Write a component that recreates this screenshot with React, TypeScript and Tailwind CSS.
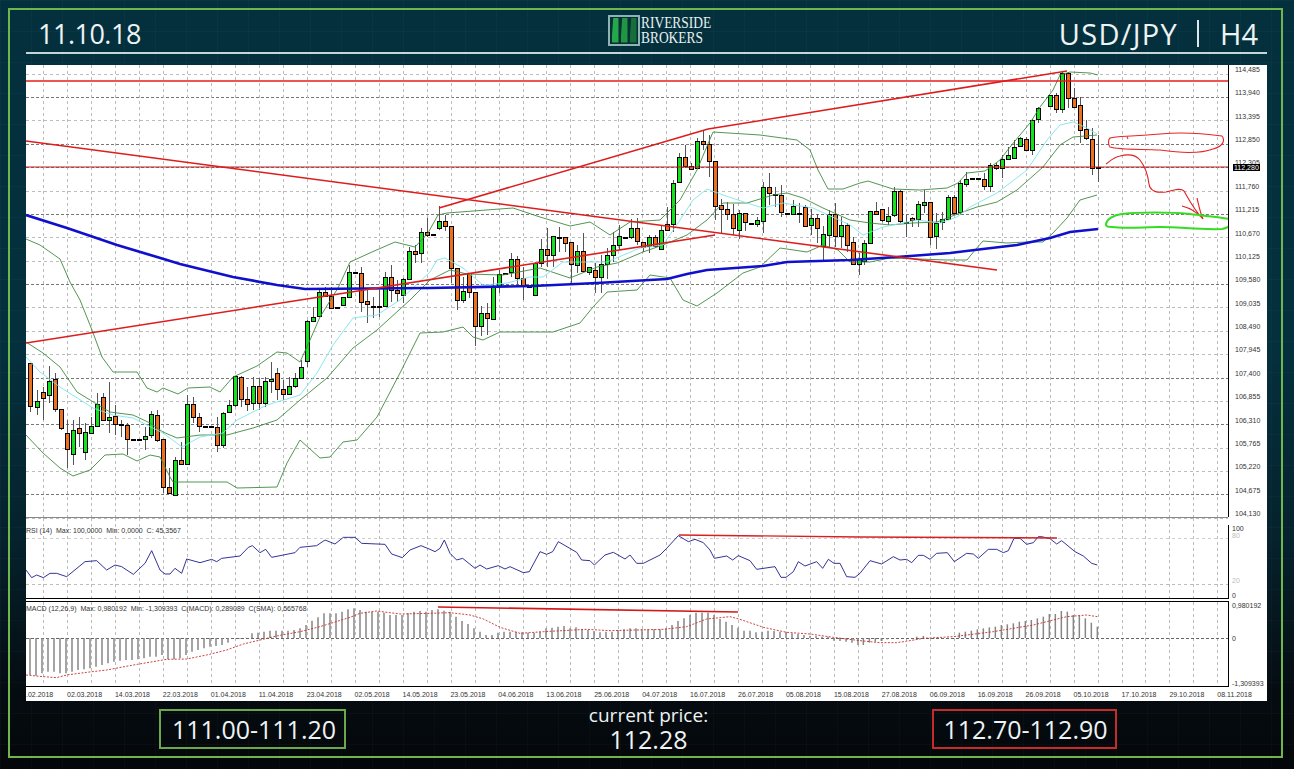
type Candle = [number, number, number, number, number, number]
type Pt = [number, number]

// readings are per crop, at() moves them back to page coordinates
const at = (ox: number, oy: number, rows: number[][]) =>
  rows.map((r) => [ox + r[0] / 3, oy + r[1] / 3, oy + r[2] / 3, oy + r[3] / 3, oy + r[4] / 3, r[5]] as Candle)
const line = (ox: number, oy: number, rows: number[][]) => rows.map((r) => [ox + r[0] / 3, oy + r[1] / 3] as Pt)
const pts = (p: Pt[]) => p.map((q) => q.join(',')).join(' ')

const candles: Candle[] = [
  ...at(0, 260, [
    [90, 308, 436, 308, 455, 0], [110, 422, 440, 390, 465, 1], [128, 396, 415, 380, 480, 0], [147, 362, 403, 318, 430, 1],
    [165, 358, 448, 338, 455, 0], [183, 448, 506, 448, 510, 0], [201, 520, 568, 480, 625, 0], [219, 511, 583, 480, 615, 1],
    [237, 505, 519, 472, 560, 0], [255, 517, 577, 490, 600, 1], [273, 497, 517, 470, 520, 1], [291, 431, 496, 400, 500, 1],
    [309, 412, 480, 400, 482, 0], [327, 470, 479, 365, 520, 1], [345, 468, 493, 435, 525, 0], [363, 493, 495, 480, 530, 0],
    [381, 495, 538, 490, 585, 0], [399, 537, 539, 537, 539, 0], [417, 537, 539, 537, 539, 0], [435, 527, 536, 500, 570, 1],
    [453, 463, 527, 452, 535, 1], [471, 464, 538, 450, 545, 0], [489, 538, 682, 538, 700, 0], [507, 682, 700, 625, 703, 0],
    [525, 601, 705, 590, 708, 1], [543, 601, 612, 545, 612, 0], [561, 431, 612, 405, 615, 1], [579, 431, 470, 410, 490, 0],
    [597, 470, 498, 460, 515, 0], [615, 497, 499, 497, 499, 0], [633, 497, 499, 497, 499, 0], [651, 500, 553, 470, 575, 0],
    [669, 458, 553, 455, 565, 1], [687, 436, 458, 420, 460, 1], [705, 349, 436, 349, 440, 1], [723, 350, 416, 348, 440, 0],
    [741, 416, 430, 380, 452, 0], [759, 379, 431, 350, 450, 1], [777, 379, 431, 355, 450, 0], [795, 364, 431, 350, 440, 1],
    [813, 358, 363, 305, 400, 1], [831, 340, 388, 325, 420, 0], [849, 388, 403, 360, 420, 0], [867, 379, 403, 350, 405, 1],
    [885, 355, 379, 340, 385, 1], [903, 322, 355, 300, 355, 1], [921, 183, 304, 180, 320, 1], [939, 170, 183, 140, 185, 1],
    [957, 97, 169, 90, 170, 1], [975, 95, 107, 80, 110, 0], [993, 107, 142, 80, 147, 0], [1011, 142, 143, 142, 143, 0],
    [1029, 112, 136, 112, 136, 1], [1047, 37, 111, 15, 112, 1], [1065, 37, 38, 37, 38, 0], [1083, 38, 124, 20, 155, 0],
    [1101, 124, 133, 90, 190, 0], [1119, 137, 139, 110, 175, 0], [1137, 137, 139, 90, 170, 0], [1155, 52, 138, 35, 140, 1],
    [1173, 52, 90, 15, 125, 0], [1191, 90, 100, 60, 125, 0], [1209, 58, 106, 55, 130, 1],
  ]),
  ...at(395, 195, [
    [42, 168, 253, 155, 255, 1], [60, 168, 176, 150, 205, 0], [78, 112, 176, 98, 205, 1], [96, 112, 122, 70, 125, 0], [114, 118, 120, 118, 120, 0],
  ]),
  ...at(430, 120, [
    [26, 304, 325, 258, 330, 1], [44, 304, 319, 285, 333, 0], [62, 319, 445, 319, 490, 0], [80, 445, 541, 445, 570, 0],
    [98, 514, 541, 470, 550, 1], [116, 460, 517, 460, 535, 0], [134, 517, 620, 517, 678, 0], [152, 580, 620, 558, 648, 1],
    [170, 580, 596, 550, 645, 0], [188, 500, 596, 470, 596, 1], [206, 461, 498, 450, 518, 1], [224, 459, 461, 459, 461, 0],
    [242, 418, 458, 400, 470, 1], [260, 418, 475, 408, 500, 0], [278, 475, 497, 440, 540, 0], [296, 497, 499, 497, 499, 0],
    [314, 430, 525, 425, 525, 1], [332, 388, 430, 358, 440, 1], [350, 388, 405, 325, 440, 0], [368, 349, 405, 349, 440, 1],
    [386, 350, 352, 320, 395, 0], [404, 350, 367, 350, 395, 0], [422, 367, 433, 367, 490, 0], [440, 392, 433, 375, 460, 1],
    [458, 392, 451, 340, 455, 0], [476, 442, 456, 440, 465, 1], [494, 451, 471, 430, 518, 0], [512, 433, 471, 405, 518, 1],
    [530, 406, 433, 385, 478, 1], [548, 376, 406, 335, 425, 1], [566, 349, 376, 315, 390, 1], [584, 350, 352, 350, 352, 0],
    [602, 325, 353, 298, 356, 1], [620, 325, 365, 295, 375, 0], [638, 365, 380, 365, 395, 0], [656, 352, 378, 345, 400, 1],
    [674, 352, 380, 345, 385, 0], [692, 329, 385, 315, 390, 1], [710, 311, 328, 262, 330, 0], [728, 188, 311, 180, 335, 1],
    [746, 112, 188, 100, 188, 1], [764, 112, 138, 75, 145, 0], [782, 138, 146, 130, 148, 0], [800, 64, 146, 55, 148, 1],
    [818, 64, 73, 32, 90, 0], [836, 73, 124, 45, 170, 0], [854, 124, 258, 124, 300, 0], [872, 256, 268, 238, 338, 0],
    [890, 268, 283, 245, 300, 0], [908, 283, 326, 253, 345, 0], [926, 278, 328, 270, 358, 1], [944, 278, 304, 278, 333, 0],
    [962, 310, 312, 310, 312, 0], [980, 301, 313, 290, 320, 1], [998, 202, 303, 185, 340, 1], [1016, 202, 221, 160, 255, 0],
    [1034, 222, 226, 200, 260, 0], [1052, 226, 277, 195, 292, 0], [1070, 280, 282, 280, 282, 0], [1088, 258, 281, 240, 285, 1],
    [1106, 280, 282, 248, 310, 0], [1124, 260, 316, 255, 318, 0], [1142, 295, 316, 268, 345, 1], [1160, 295, 325, 283, 370, 0],
    [1178, 343, 378, 318, 420, 1], [1196, 281, 343, 270, 380, 1], [1214, 282, 349, 250, 382, 0], [1232, 316, 349, 290, 385, 1],
    [1250, 316, 376, 310, 395, 0], [1268, 367, 434, 350, 435, 0],
  ]),
  ...at(850, 170, [
    [26, 268, 283, 250, 315, 1], [42, 218, 272, 210, 285, 1], [60, 122, 218, 122, 218, 1], [78, 122, 132, 95, 135, 0],
    [96, 118, 150, 118, 155, 0], [114, 137, 152, 110, 165, 1], [132, 64, 137, 52, 140, 1], [150, 64, 155, 60, 160, 0],
    [168, 155, 157, 135, 200, 0], [186, 145, 150, 140, 170, 0], [204, 103, 148, 92, 170, 1], [222, 95, 103, 60, 130, 1],
    [240, 95, 200, 95, 225, 0], [258, 160, 200, 130, 237, 1], [276, 146, 155, 125, 180, 1], [294, 80, 145, 75, 150, 1],
    [312, 80, 128, 75, 135, 0], [330, 40, 128, 30, 135, 1], [348, 26, 40, 5, 50, 1], [366, 24, 26, 24, 26, 0], [384, 24, 26, 24, 26, 0],
    [402, 28, 50, 10, 60, 0],
  ]),
  ...at(860, 0, [
    [390, 494, 558, 490, 575, 1], [408, 494, 504, 490, 510, 0], [426, 478, 504, 465, 535, 1], [444, 466, 478, 440, 480, 1],
    [462, 440, 472, 420, 475, 1], [480, 415, 440, 410, 440, 1], [498, 416, 450, 410, 452, 0], [516, 360, 450, 358, 465, 1],
    [534, 325, 359, 320, 368, 1], [570, 284, 316, 284, 320, 1], [588, 284, 327, 280, 340, 0], [606, 220, 327, 215, 340, 1],
    [624, 220, 294, 215, 325, 0], [642, 295, 322, 265, 325, 0], [660, 314, 388, 290, 430, 0], [678, 388, 415, 360, 420, 0],
    [696, 416, 503, 385, 525, 0], [714, 500, 502, 405, 545, 0],
  ]),
]

const upperBand: Pt[] = [[26,239],[40,245],[60,259],[70,282],[80,300],[92,330],[102,357],[113,372],[137,372],[147,388],[157,392],[163,388],[178,394],[188,388],[210,387],[220,392],[233,377],[257,366],[277,352],[287,353],[300,362],[310,340],[320,317],[338,288],[350,262],[372,252],[395,242],[415,247],[428,233],[438,215],[447,213],[513,208],[540,217],[570,226],[590,222],[610,235],[630,222],[660,220],[680,200],[697,170],[713,132],[760,135],[797,140],[810,150],[818,170],[828,189],[843,189],[860,183],[868,181],[893,189],[920,190],[947,188],[958,183],[967,173],[985,171],[1000,160],[1010,147],[1030,123],[1040,107],[1053,90],[1060,75],[1070,72],[1090,73],[1098,75]]
const midBand: Pt[] = [[26,342],[43,353],[60,367],[77,392],[95,403],[110,412],[133,415],[150,423],[163,432],[177,438],[200,435],[227,435],[253,428],[277,420],[300,400],[327,378],[353,348],[377,330],[410,300],[430,280],[450,270],[467,274],[503,275],[540,268],[570,278],[597,267],[617,263],[643,252],[663,245],[687,235],[707,220],[723,203],[747,203],[773,195],[787,193],[803,198],[823,208],[850,220],[870,223],[890,225],[913,223],[937,222],[960,213],[977,207],[997,202],[1017,190],[1043,167],[1060,145],[1073,137],[1097,135]]
const cyanLine: Pt[] = [[26,357],[40,372],[60,387],[93,408],[113,415],[133,418],[147,425],[163,433],[182,447],[200,437],[223,433],[237,420],[267,405],[300,395],[317,373],[333,345],[353,318],[377,315],[400,300],[430,272],[437,260],[445,258],[463,268],[483,285],[507,283],[530,277],[543,277],[563,262],[607,262],[640,248],[663,245],[680,220],[693,200],[707,189],[723,195],[747,203],[763,208],[783,203],[813,208],[850,225],[863,235],[883,227],[917,220],[940,223],[957,217],[970,207],[997,193],[1027,170],[1047,140],[1060,125],[1073,122],[1087,128],[1097,134]]
const lowerBand: Pt[] = [[26,435],[43,453],[60,468],[73,476],[90,470],[105,455],[123,454],[137,461],[150,455],[160,457],[170,477],[173,482],[227,482],[237,488],[277,487],[287,463],[300,440],[320,458],[330,457],[343,442],[357,440],[377,417],[400,373],[420,333],[443,332],[463,327],[473,337],[483,340],[500,332],[553,332],[580,323],[593,307],[607,292],[637,290],[650,275],[670,278],[683,300],[697,306],[717,293],[743,273],[760,267],[780,248],[807,252],[823,245],[838,250],[850,262],[870,262],[890,258],[947,260],[967,260],[975,250],[983,241],[1007,243],[1027,242],[1043,242],[1053,233],[1067,218],[1080,200],[1097,195]]
const slowMa: Pt[] = [[26,215],[67,228],[117,245],[167,260],[180,264],[233,277],[277,285],[305,289],[430,288],[533,286],[597,283],[667,279],[687,274],[707,270],[763,266],[787,262],[850,260],[897,257],[950,253],[983,249],[1017,245],[1050,238],[1070,232],[1098,229]]

const rsi: Pt[] = [
  ...line(0, 510, [[78,180],[95,203],[110,195],[130,203],[150,190],[170,190],[200,200],[255,155],[290,152],[320,180],[345,165],[365,170],[400,193],[435,160],[455,122],[480,180],[495,192],[510,192],[525,175],[545,190],[560,147],[600,158],[635,148],[650,155],[665,145],[720,138],[745,112],[757,107],[780,128],[797,118],[815,142],[885,128],[900,112],[950,107],[975,90],[1005,102],[1030,82],[1065,82],[1085,100],[1155,103],[1175,132],[1207,143],[1230,120],[1263,107],[1290,118]]),
  ...line(430, 520, [[15,95],[30,85],[43,60],[60,100],[80,120],[98,115],[135,145],[150,135],[170,147],[205,137],[225,147],[240,140],[280,158],[298,155],[330,95],[350,103],[368,95],[385,65],[440,97],[455,120],[480,122],[493,135],[525,105],[550,97],[585,117],[600,105],[620,130],[640,130],[690,105],[710,85],[745,47],[775,65],[795,58],[820,68],[840,90],[853,115],[890,108],[908,120],[925,107],[960,122],[980,148],[1035,140],[1053,172],[1068,172],[1090,155],[1105,125],[1125,138],[1160,125],[1178,145],[1195,118],[1212,130],[1230,130],[1250,170],[1275,172],[1290,160]]),
  ...line(860, 510, [[30,152],[65,162],[100,140],[120,150],[140,148],[155,158],[175,136],[190,136],[210,148],[230,130],[262,128],[283,155],[320,130],[340,132],[355,145],[385,118],[410,118],[430,128],[445,122],[462,85],[480,85],[500,103],[520,98],[535,80],[545,80],[570,86],[590,102],[605,92],[645,125],[670,138],[695,160],[712,165]]),
]

const macdBars: Pt[] = [
  ...line(0, 510, [[90,495],[108,497],[126,490],[144,485],[162,485],[180,490],[198,490],[216,485],[234,480],[252,478],[270,475],[288,470],[306,465],[324,460],[342,455],[360,452],[378,450],[396,450],[414,448],[432,445],[450,440],[468,440],[486,435],[504,448],[522,448],[540,445],[558,435],[576,425],[594,420],[612,415],[630,410],[648,408],[666,405],[684,398],[720,386],[738,383],[756,370],[774,368],[792,365],[810,362],[828,362],[846,362],[864,362],[882,360],[900,355],[918,345],[936,332],[954,322],[972,310],[990,310],[1008,310],[1026,305],[1044,298],[1062,295],[1080,300],[1098,305],[1116,305],[1134,305],[1152,308],[1170,315],[1188,315],[1206,315],[1224,310],[1242,305],[1260,303],[1278,305]]),
  ...line(430, 520, [[6,270],[24,268],[42,272],[60,275],[78,290],[96,303],[114,312],[132,325],[150,335],[168,345],[186,345],[204,338],[222,335],[240,335],[258,335],[276,337],[294,338],[312,338],[330,335],[348,325],[366,323],[384,320],[402,318],[420,325],[438,322],[456,327],[474,330],[492,333],[510,337],[528,335],[546,335],[564,330],[582,328],[600,325],[618,325],[636,328],[654,328],[672,328],[690,328],[708,325],[726,315],[744,303],[762,295],[780,285],[798,278],[816,278],[834,278],[852,285],[870,297],[888,305],[906,315],[924,323],[942,332],[960,332],[978,337],[996,335],[1014,332],[1032,333],[1050,335],[1068,335],[1086,340],[1104,342],[1122,345],[1140,347],[1158,348],[1176,350],[1194,350],[1212,362],[1230,363],[1248,365],[1266,368],[1284,375]]),
  ...line(860, 510, [[10,405],[28,398],[46,395],[64,393],[82,388],[170,380],[190,378],[298,368],[316,365],[334,362],[352,358],[370,355],[388,352],[406,350],[424,345],[442,343],[460,340],[478,335],[496,333],[514,330],[532,325],[550,320],[568,312],[586,312],[604,303],[622,305],[640,315],[658,317],[676,325],[694,338],[712,350]]),
]

const macdSignal: Pt[] = [
  ...line(0, 510, [[78,495],[130,500],[170,503],[200,495],[260,487],[320,480],[400,465],[500,448],[560,447],[620,435],[680,420],[730,402],[780,390],[830,378],[900,365],[960,350],[1050,322],[1080,310],[1130,303],[1200,312],[1290,310]]),
  ...line(430, 520, [[60,278],[120,285],[160,297],[210,322],[270,340],[340,335],[470,328],[540,332],[700,328],[770,320],[830,297],[900,290],[930,298],[1000,322],[1070,337],[1140,342],[1210,352],[1290,362]]),
  ...line(860, 510, [[60,398],[110,398],[150,392],[190,385],[280,380],[400,365],[520,345],[620,320],[680,315],[712,320]]),
]

const priceLabels = ['114,485','113,940','113,395','112,850','112,305','111,760','111,215','110,670','110,125','109,580','109,035','108,490','107,945','107,400','106,855','106,310','105,765','105,220','104,675','104,130']
const dateLabels = ['02.03.2018','14.03.2018','22.03.2018','01.04.2018','11.04.2018','23.04.2018','02.05.2018','14.05.2018','23.05.2018','04.06.2018','13.06.2018','25.06.2018','04.07.2018','16.07.2018','26.07.2018','05.08.2018','15.08.2018','27.08.2018','06.09.2018','16.09.2018','26.09.2018','05.10.2018','17.10.2018','29.10.2018','08.11.2018']
const darkRows = [1, 3, 4, 6, 9, 13, 15, 18]

function Chart() {
  return (
    <svg viewBox="26 65 1241 636" className="block h-[636px] w-[1241px] font-['Liberation_Sans',sans-serif] text-[7px]">
      <defs>
        <clipPath id="plot"><rect x="26" y="65" width="1202" height="452" /></clipPath>
      </defs>

      {/* grid */}
      {Array.from({ length: 20 }, (_, i) => {
        const y = Math.round(73.7 + 23.37 * i) + 0.5
        const dark = darkRows.includes(i)
        return <line key={i} x1="26" x2="1228" y1={y} y2={y} stroke={dark ? '#777' : '#bcbcbc'} strokeDasharray={dark ? '3 2' : '3 3'} />
      })}
      {Array.from({ length: 50 }, (_, i) => {
        const x = Math.round(43.3 + 23.96 * i) + 0.5
        return (
          <g key={i} stroke="#bcbcbc" strokeDasharray="3 3">
            <line x1={x} x2={x} y1="65" y2="517" />
            <line x1={x} x2={x} y1="518" y2="598" />
            <line x1={x} x2={x} y1="602" y2="686" />
          </g>
        )
      })}
      <line x1="26" x2="1228" y1="538.5" y2="538.5" stroke="#cfcfcf" strokeDasharray="3 3" />
      <line x1="26" x2="1228" y1="584.5" y2="584.5" stroke="#bcbcbc" strokeDasharray="3 3" />
      <line x1="26" x2="1228" y1="638.5" y2="638.5" stroke="#666" strokeDasharray="3 2" />

      <g clipPath="url(#plot)">
        {/* candles */}
        {candles.map(([cx, top, bottom, hi, lo, up], i) => {
          const x = Math.round(cx)
          const t = Math.round(Math.min(top, bottom))
          const h = Math.max(Math.round(Math.abs(bottom - top)), 1)
          return (
            <g key={i} shapeRendering="crispEdges">
              <line x1={x + 0.5} x2={x + 0.5} y1={hi} y2={lo} stroke="#555" />
              <rect x={x - 1.5} y={t + 0.5} width="4" height={h} fill={up ? '#14e21c' : '#ec701e'} stroke="#000" />
            </g>
          )
        })}

        {/* indicators */}
        <polyline points={pts(upperBand)} fill="none" stroke="#3f8a3f" strokeWidth="0.9" />
        <polyline points={pts(midBand)} fill="none" stroke="#3f8a3f" strokeWidth="0.9" />
        <polyline points={pts(lowerBand)} fill="none" stroke="#3f8a3f" strokeWidth="0.9" />
        <polyline points={pts(cyanLine)} fill="none" stroke="#7ee4ea" strokeWidth="0.9" />
        <polyline points={pts(slowMa)} fill="none" stroke="#1010cc" strokeWidth="2.7" />

        {/* trend lines */}
        <line x1="26" y1="81" x2="1228" y2="81" stroke="#e41c1c" strokeWidth="1.5" />
        <line x1="26" y1="167" x2="1228" y2="167" stroke="#c02020" strokeWidth="1" />
        <line x1="26" y1="141" x2="997" y2="270" stroke="#dd1c1c" strokeWidth="1.6" />
        <line x1="26" y1="343" x2="715" y2="235" stroke="#dd1c1c" strokeWidth="1.6" />
        <line x1="439" y1="208" x2="708" y2="129" stroke="#dd1c1c" strokeWidth="1.6" />
        <line x1="708" y1="129" x2="1067" y2="71" stroke="#dd1c1c" strokeWidth="1.6" />

        {/* hand marks */}
        <path d="M1110 138 C1118 136 1127 137 1160 134 C1180 132 1200 133 1222 136 C1225 140 1224 146 1213 149 C1200 154 1180 153 1160 150 C1140 149 1120 150 1110 147 C1108 144 1108 140 1110 138 M1127 137 L1128 139" fill="none" stroke="#e82424" strokeWidth="1.1" />
        <path d="M1106 164 C1110 161 1114 157 1120 156 C1128 154 1135 154 1140 160 C1146 168 1148 175 1149 184 C1150 192 1158 193 1166 192 C1172 191 1180 187 1184 191 C1188 198 1194 210 1203 219 M1182 206 C1190 208 1197 212 1203 219 M1197 198 C1199 206 1200 212 1203 219" fill="none" stroke="#e02020" strokeWidth="1.1" />
        <path d="M1106 225 C1106 219 1114 215 1122 214 C1140 212 1170 212 1190 214 C1205 216 1220 217 1229 219 C1232 224 1230 228 1222 229 C1200 230 1180 227 1160 227 C1145 227 1125 229 1112 227 C1108 227 1106 226 1106 225" fill="none" stroke="#35dc22" strokeWidth="2" />
      </g>

      {/* rsi window */}
      <polyline points={pts(rsi)} fill="none" stroke="#1c1c8c" strokeWidth="0.9" />
      <polyline points="679,535 860,537 1057,538" fill="none" stroke="#d82020" strokeWidth="1.4" />
      <text x="26" y="533" fill="#333" className="whitespace-pre">RSI (14)  Max: 100,0000  Min: 0,0000  C: 45,3567</text>

      {/* macd window */}
      {macdBars.map(([x, y], i) => (
        <line key={i} x1={x} x2={x} y1={y} y2="638" stroke="#868686" strokeWidth="1.5" />
      ))}
      <polyline points={pts(macdSignal)} fill="none" stroke="#c2302a" strokeWidth="0.9" strokeDasharray="2 1.5" />
      <line x1="438" y1="607" x2="738" y2="612" stroke="#d41818" strokeWidth="1.6" />
      <text x="26" y="611" fill="#333" className="whitespace-pre">MACD (12,26,9)  Max: 0,980192  Min: -1,309393  C(MACD): 0,289089  C(SMA): 0,565768</text>

      {/* frames */}
      <rect x="26" y="517" width="1202" height="1" fill="#888" />
      <rect x="26" y="598" width="1202" height="1" fill="#000" />
      <rect x="26" y="601" width="1202" height="1" fill="#000" />
      <rect x="26" y="686" width="1202" height="1" fill="#000" />
      <rect x="1228" y="65" width="1" height="452" fill="#000" />
      <rect x="1228" y="525" width="1" height="74" fill="#000" />
      <rect x="1228" y="601" width="1" height="86" fill="#000" />

      {/* axis labels */}
      {priceLabels.map((p, i) => (
        <text key={p} x="1235" y={72 + 23.37 * i} fill="#333">{p}</text>
      ))}
      <rect x="1233" y="164" width="27" height="7" fill="#000" />
      <text x="1234" y="170" fill="#fff">112,280</text>
      <text x="1232" y="531" fill="#333">100</text>
      <text x="1232" y="538" fill="#bbb">80</text>
      <text x="1232" y="583" fill="#bbb">20</text>
      <text x="1232" y="598" fill="#333">0</text>
      <text x="1232" y="608" fill="#333">0,980192</text>
      <text x="1232" y="641" fill="#333">0</text>
      <text x="1232" y="686" fill="#333">-1,309393</text>
      <text x="26" y="697" fill="#333">.02.2018</text>
      {dateLabels.map((d, i) => (
        <text key={d} x={67 + 47.93 * i} y="697" fill="#333">{d}</text>
      ))}
    </svg>
  )
}

function Logo() {
  return (
    <div className="flex items-center gap-[1px]">
      <div className="flex h-[31px] w-[32px] items-center justify-center gap-[2px] border-2 border-[#8fb3b3] bg-[#062f36]">
        <div className="h-[25px] w-[7px] bg-[#25a84a] [clip-path:polygon(25%_0,100%_0,100%_100%,0_100%)]" />
        <div className="h-[25px] w-[7px] bg-[#1f9642] [clip-path:polygon(25%_0,100%_0,100%_100%,0_100%)]" />
        <div className="h-[25px] w-[7px] bg-[#146f38] [clip-path:polygon(25%_0,100%_0,100%_100%,0_100%)]" />
      </div>
      <div className="w-[71px] font-['Liberation_Serif',serif] text-[17px] leading-[15.5px] text-[#e6f0ee]">
        <div className="origin-left scale-x-[0.79] whitespace-nowrap">RIVERSIDE</div>
        <div className="origin-left scale-x-[0.79] whitespace-nowrap">BROKERS</div>
      </div>
    </div>
  )
}

export default function App() {
  return (
    <div className="h-[769px] w-[1294px] overflow-hidden bg-[linear-gradient(rgba(255,255,255,.018)_1px,transparent_1px),linear-gradient(90deg,rgba(255,255,255,.018)_1px,transparent_1px),linear-gradient(180deg,#04303e_0%,#04303d_45%,#05222d_70%,#050c11_90%,#04070a_100%)] bg-[size:31px_31px,31px_31px,100%_100%] pb-[11px] pl-[8px] pr-[11px] pt-[8px] font-['Open_Sans',sans-serif] text-[#eef3f4]">
      <div className="flex h-[750px] flex-col border-2 border-[#6fb64c] pl-[16px] pr-[14px]">
        <header className="flex h-[44px] items-center border-b-2 border-[#c6d5d6] pt-[5px]">
          <div className="w-[582px] shrink-0 pl-[12px] text-[27px] font-normal leading-none tracking-[-0.5px]">11.10.18</div>
          <div className="-mt-[7px]"><Logo /></div>
          <div className="ml-auto flex items-center pr-[9px] text-[29px] font-normal leading-none">
            <span className="tracking-[1.3px]">USD/JPY</span>
            <span className="ml-[19px] mr-[21px] h-[27px] w-[2px] bg-[#dfe8e9]" />
            <span>H4</span>
          </div>
        </header>

        <div className="mt-[11px] h-[636px] w-[1241px] bg-white">
          <Chart />
        </div>

        <footer className="mt-[8px] flex h-[40px] pl-[133px]">
          <div className="flex h-[40px] w-[187px] items-center justify-center border-2 border-[#6aa84a] pl-[3px] text-[25px] leading-none">111.00-111.20</div>
          <div className="-mt-[5px] ml-[225px] w-[155px] text-center">
            <div className="text-[19px] leading-[22px]">current price:</div>
            <div className="text-[25px] leading-[26px]">112.28</div>
          </div>
          <div className="ml-[206px] flex h-[40px] w-[185px] items-center justify-center border-2 border-[#c62a2a] pl-[2px] text-[25px] leading-none">112.70-112.90</div>
        </footer>
      </div>
    </div>
  )
}
